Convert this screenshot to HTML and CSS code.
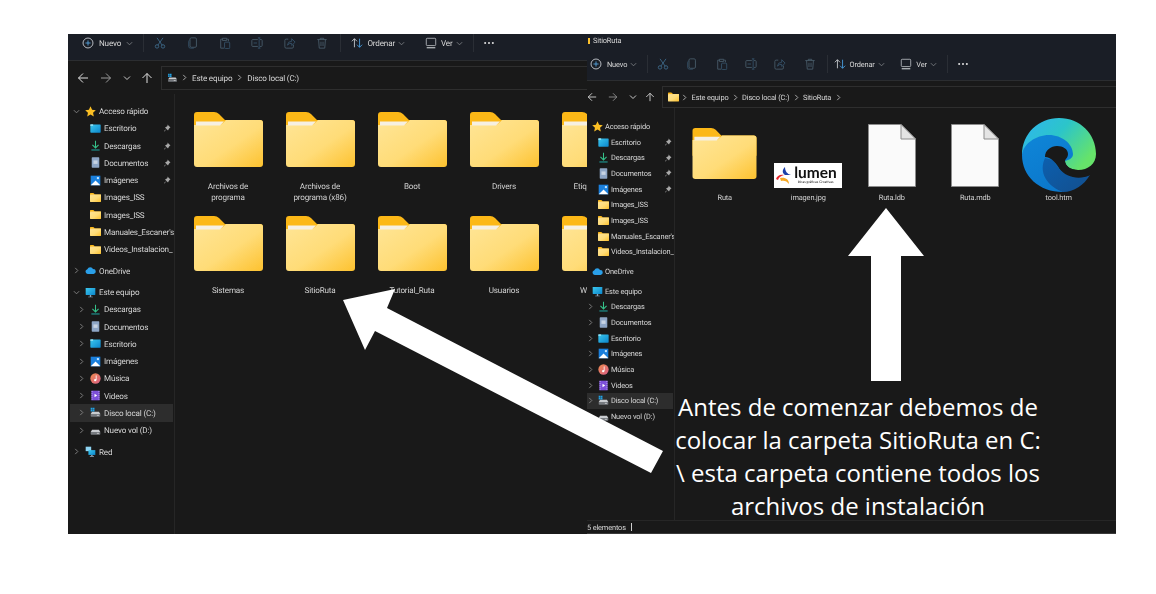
FILE: index.html
```html
<!DOCTYPE html>
<html lang="es">
<head>
  <meta charset="UTF-8" />
  <meta name="viewport" content="width=device-width, initial-scale=1.0"/>
  <title>Instalación SitioRuta</title>
  <link rel="stylesheet" href="styles.css">
</head>
<body>

<svg class="defs" aria-hidden="true">
  <defs>
    <linearGradient id="gFolder" x1="0" y1="0" x2="1" y2="1">
      <stop offset="0" stop-color="#ffe596"/><stop offset=".55" stop-color="#ffdc78"/><stop offset="1" stop-color="#fdc22f"/>
    </linearGradient>
    <linearGradient id="gTile" x1="0" y1="0" x2="1" y2="1">
      <stop offset="0" stop-color="#3cc8ee"/><stop offset="1" stop-color="#0b86cc"/>
    </linearGradient>
    <linearGradient id="gMusic" x1="0" y1="0" x2="1" y2="1">
      <stop offset="0" stop-color="#ee8a4e"/><stop offset="1" stop-color="#d95f86"/>
    </linearGradient>
    <linearGradient id="gEdgeTop" x1="0" y1="0" x2="1" y2=".6">
      <stop offset="0" stop-color="#2fb4f2"/><stop offset=".5" stop-color="#2cc5c9"/><stop offset="1" stop-color="#66e36a"/>
    </linearGradient>
    <linearGradient id="gEdgeMid" x1="0" y1="0" x2=".5" y2="1">
      <stop offset="0" stop-color="#0f86d8"/><stop offset="1" stop-color="#0b78cc"/>
    </linearGradient>
    <linearGradient id="gEdgeDark" x1="0" y1="0" x2="1" y2="1">
      <stop offset="0" stop-color="#0c5fae"/><stop offset="1" stop-color="#134f8e"/>
    </linearGradient>

    <symbol id="folder" viewBox="0 0 69 55">
      <path fill="#fcb817" d="M3 0H20q3 0 5 2l6 6H66a3 3 0 0 1 3 3V30H0V3a3 3 0 0 1 3-3z"/>
      <path fill="url(#gFolder)" d="M0 13H25q2 0 4-2l3-3H66a3 3 0 0 1 3 3V52a3 3 0 0 1-3 3H3a3 3 0 0 1-3-3z"/>
      <path fill="#f6f0e2" d="M2 9.500H30L26 13.500H2z"/>
    </symbol>
    <symbol id="star" viewBox="0 0 16 16">
      <path fill="#fbbf24" d="M8 .5l2.300 5 5.400.6-4 3.700 1.100 5.400L8 12.500l-4.800 2.700 1.100-5.400-4-3.700 5.400-.6z"/>
    </symbol>
    <symbol id="tile" viewBox="0 0 16 16">
      <rect x=".5" y="2" width="15" height="12" rx="1" fill="url(#gTile)"/>
      <rect x=".5" y="2" width="4" height="2" fill="#a5e7f7"/>
    </symbol>
    <symbol id="down" viewBox="0 0 16 16">
      <path fill="none" stroke="#35c28a" stroke-width="1.500" d="M8 1v10M3.500 7L8 11.500 12.500 7"/>
      <path fill="none" stroke="#1ea4a0" stroke-width="1.500" d="M2 14.500h12"/>
    </symbol>
    <symbol id="doc" viewBox="0 0 16 16">
      <rect x="2.500" y=".5" width="11" height="15" rx="1" fill="#8ea6c6"/>
      <rect x="5" y="5" width="6" height="5" fill="#c7d3e3"/>
    </symbol>
    <symbol id="pic" viewBox="0 0 16 16">
      <rect x="1" y="1" width="14" height="14" fill="#1a7fdc"/>
      <path fill="#fff" d="M1 15l5-5 2-2 3 3 4 4z"/>
      <rect x="10" y="3" width="3" height="3" fill="#bfe3ff"/>
    </symbol>
    <symbol id="music" viewBox="0 0 16 16">
      <circle cx="8" cy="8" r="7.500" fill="url(#gMusic)"/>
      <path fill="none" stroke="#fff" stroke-width="1.200" d="M9 3.500v7"/>
      <circle cx="7.500" cy="10.500" r="1.600" fill="#fff"/>
    </symbol>
    <symbol id="video" viewBox="0 0 16 16">
      <rect x="2" y="1" width="12" height="14" fill="#7c4fd8"/>
      <path fill="#fff" d="M6.500 5.500l4 2.500-4 2.500z"/>
      <path stroke="#c8aef5" stroke-width="1.300" stroke-dasharray="1.500 1.500" d="M3 1.500v13M13 1.500v13"/>
    </symbol>
    <symbol id="drive" viewBox="0 0 16 16">
      <path fill="#c9ccd0" d="M3 7h10l2 3H1z"/>
      <rect x="1" y="10" width="14" height="4" rx="1" fill="#777b80"/>
      <rect x="10" y="11.500" width="3" height="1" fill="#e5e5e5"/>
    </symbol>
    <symbol id="drivec" viewBox="0 0 16 16">
      <use href="#drive"/>
      <path fill="#22a3e6" d="M1 1h2.500v2.500H1zM4 1h2.500v2.500H4zM1 4h2.500v2.500H1zM4 4h2.500v2.500H4z"/>
    </symbol>
    <symbol id="cloud" viewBox="0 0 16 16">
      <path fill="#2a9fe8" d="M4 13a3.500 3.500 0 0 1-.6-6.900A4.500 4.500 0 0 1 11.800 6 3.500 3.500 0 0 1 12.500 13z"/>
    </symbol>
    <symbol id="pc" viewBox="0 0 16 16">
      <rect x="1" y="1.500" width="14" height="10" rx=".7" fill="url(#gTile)"/>
      <path fill="#8aa3b8" d="M7 11.500h2V14H7zM4.500 14h7v1h-7z"/>
    </symbol>
    <symbol id="net" viewBox="0 0 16 16">
      <rect x="1" y="1" width="8" height="6.500" fill="#8ed4f2"/>
      <rect x="5" y="6" width="10" height="7" fill="url(#gTile)"/>
      <path fill="#9ab1c4" d="M9 13h2v1.500h2v1H7v-1h2z"/>
    </symbol>
    <symbol id="pin" viewBox="0 0 16 16">
      <path fill="#a8a8a8" d="M9 1l6 6-2 1-2 3-1 2-3-3-4 5-1-1 5-4-3-3 2-1 3-2z"/>
    </symbol>
    <symbol id="chev-r" viewBox="0 0 8 8">
      <path fill="none" stroke="currentColor" d="M2.500 1l3 3-3 3"/>
    </symbol>
    <symbol id="chev-d" viewBox="0 0 8 8">
      <path fill="none" stroke="currentColor" d="M1 2.500l3 3 3-3"/>
    </symbol>
    <symbol id="back" viewBox="0 0 12 12">
      <path fill="none" stroke="currentColor" d="M11 6H1.500M6 1.500L1.500 6 6 10.500"/>
    </symbol>
    <symbol id="fwd" viewBox="0 0 12 12">
      <path fill="none" stroke="currentColor" d="M1 6h9.500M6 1.500L10.500 6 6 10.500"/>
    </symbol>
    <symbol id="up" viewBox="0 0 12 12">
      <path fill="none" stroke="currentColor" d="M6 11V1.500M1.500 6L6 1.500 10.500 6"/>
    </symbol>
    <symbol id="plus" viewBox="0 0 14 14">
      <circle cx="7" cy="7" r="5.800" fill="none" stroke="#cfd3d8"/>
      <path stroke="#5aa9e6" d="M7 4v6M4 7h6"/>
    </symbol>
    <symbol id="cut" viewBox="0 0 14 14">
      <path fill="none" stroke="#3f6d8e" d="M3.500 1l6 8.500M10.500 1l-6 8.500"/>
      <circle cx="3.500" cy="11" r="2" fill="none" stroke="#3f6d8e"/>
      <circle cx="10.500" cy="11" r="2" fill="none" stroke="#3f6d8e"/>
    </symbol>
    <symbol id="copy" viewBox="0 0 14 14">
      <rect x="3.500" y="1" width="7.500" height="11" rx="1.500" fill="none" stroke="#4a5d6c"/>
      <path fill="none" stroke="#36536a" d="M3 3.500Q2 4 2 5v6q0 2 2 2h4"/>
    </symbol>
    <symbol id="paste" viewBox="0 0 14 14">
      <path fill="none" stroke="#4a5d6c" d="M4 2.500H2v10.500h4M9.500 2.500H11v2.500M4 1.500h5v2.500H4z"/>
      <rect x="6.500" y="6" width="6" height="7.500" rx="1" fill="none" stroke="#36536a"/>
    </symbol>
    <symbol id="rename" viewBox="0 0 14 14">
      <path fill="none" stroke="#4a5d6c" d="M8 3H2q-1 0-1 1v6q0 1 1 1h6M10.500 3H12q1 0 1 1v6q0 1-1 1h-1.500"/>
      <path fill="none" stroke="#36536a" d="M9.500 1v12M8 1h3M8 13h3M3 7h4"/>
    </symbol>
    <symbol id="share" viewBox="0 0 14 14">
      <path fill="none" stroke="#4a5d6c" d="M5 2.500H2.500q-1.500 0-1.500 1.500v7.500q0 1.500 1.500 1.500h7q1.500 0 1.500-1.500V9"/>
      <path fill="none" stroke="#36536a" d="M4 9.500Q4.500 5 9 5V2l4 4-4 4V7.500Q6 7 4 9.500z"/>
    </symbol>
    <symbol id="trash" viewBox="0 0 14 14">
      <path fill="none" stroke="#4a5d6c" d="M1.500 3h11M5 3V1.500h4V3M3 3l.8 10h6.400L11 3M5.800 5.500v5M8.200 5.500v5"/>
    </symbol>
    <symbol id="sort" viewBox="0 0 14 14">
      <path fill="none" stroke="#d0d3d6" d="M4 12V2M1 5l3-3 3 3"/>
      <path fill="none" stroke="#4aa3e8" d="M10 2v10M7 9l3 3 3-3"/>
    </symbol>
    <symbol id="view" viewBox="0 0 14 14">
      <rect x="1.500" y="1.500" width="11" height="8.500" rx="1" fill="none" stroke="#b4b8bc"/>
      <path stroke="#b4b8bc" stroke-width="1.500" d="M2 12.500h10"/>
    </symbol>
    <symbol id="dots" viewBox="0 0 14 14">
      <circle cx="2.500" cy="7" r="1.200" fill="#e0e0e0"/>
      <circle cx="7" cy="7" r="1.200" fill="#e0e0e0"/>
      <circle cx="11.500" cy="7" r="1.200" fill="#e0e0e0"/>
    </symbol>
    <symbol id="edge" viewBox="0 0 74 74">
      <path fill="url(#gEdgeTop)" d="M0 37C0 15 17 0 37 0c21 0 37 16 37 36 0 10-8 16-18 16-7 0-13-4-13-9 0-2 3-3 3-7 0-6-5-8-11-8C20 28 5 30 0 37z"/>
      <path fill="url(#gEdgeMid)" d="M0 37C1 26 14 17 27 17c13 0 24 9 24 19 0 4-4 6-8 7L30 60l11 14C17 74 0 58 0 37z"/>
      <path fill="url(#gEdgeDark)" d="M23 40c-5 10-3 26 18 34 11 0 21-7 27-17-13 5-28 1-37-15z"/>
      <path fill="#191919" d="M23 39c0-7 6-11 12-11 6 0 11 3 11 8 0 4-3 5-3 7 0 5 6 9 13 9 5 0 10 2 12 5-10 5-24 3-31-7-4-6-8-11-14-11z"/>
    </symbol>
  </defs>
</svg>

<div class="stage">

  <!-- ventana Disco local (C:) -->
  <section class="win win-a">
    <div class="toolbar">
      <svg class="tb-ic"><use href="#plus"/></svg>
      <span class="tb-text new">Nuevo</span>
      <svg class="tb-chev"><use href="#chev-d"/></svg>
      <i class="sep to-tools"></i>
      <span class="tool"><svg class="tb-ic"><use href="#cut"/></svg></span>
      <span class="tool"><svg class="tb-ic"><use href="#copy"/></svg></span>
      <span class="tool"><svg class="tb-ic"><use href="#paste"/></svg></span>
      <span class="tool"><svg class="tb-ic"><use href="#rename"/></svg></span>
      <span class="tool"><svg class="tb-ic"><use href="#share"/></svg></span>
      <span class="tool"><svg class="tb-ic"><use href="#trash"/></svg></span>
      <i class="sep from-tools"></i>
      <svg class="tb-ic"><use href="#sort"/></svg>
      <span class="tb-text">Ordenar</span>
      <svg class="tb-chev"><use href="#chev-d"/></svg>
      <svg class="tb-ic view"><use href="#view"/></svg>
      <span class="tb-text">Ver</span>
      <svg class="tb-chev"><use href="#chev-d"/></svg>
      <i class="sep"></i>
      <svg class="tb-ic dots"><use href="#dots"/></svg>
    </div>
    <div class="addr-row">
      <div class="nav">
        <svg class="nav-ic"><use href="#back"/></svg>
        <svg class="nav-ic dim"><use href="#fwd"/></svg>
        <svg class="nav-ch"><use href="#chev-d"/></svg>
        <svg class="nav-ic"><use href="#up"/></svg>
      </div>
      <div class="addr">
        <svg class="addr-ic"><use href="#drivec"/></svg>
        <svg class="crumb"><use href="#chev-r"/></svg><span>Este equipo</span>
        <svg class="crumb"><use href="#chev-r"/></svg><span>Disco local (C:)</span>
      </div>
    </div>
    <div class="body">
      <nav class="side">
        <div class="row top"><svg class="chev"><use href="#chev-d"/></svg><svg class="ic"><use href="#star"/></svg><span class="lb">Acceso rápido</span></div>
        <div class="row sub"><i class="chev"></i><svg class="ic"><use href="#tile"/></svg><span class="lb">Escritorio</span><svg class="pin"><use href="#pin"/></svg></div>
        <div class="row sub"><i class="chev"></i><svg class="ic"><use href="#down"/></svg><span class="lb">Descargas</span><svg class="pin"><use href="#pin"/></svg></div>
        <div class="row sub"><i class="chev"></i><svg class="ic"><use href="#doc"/></svg><span class="lb">Documentos</span><svg class="pin"><use href="#pin"/></svg></div>
        <div class="row sub"><i class="chev"></i><svg class="ic"><use href="#pic"/></svg><span class="lb">Imágenes</span><svg class="pin"><use href="#pin"/></svg></div>
        <div class="row sub"><i class="chev"></i><svg class="ic"><use href="#folder"/></svg><span class="lb">Images_ISS</span></div>
        <div class="row sub"><i class="chev"></i><svg class="ic"><use href="#folder"/></svg><span class="lb">Images_ISS</span></div>
        <div class="row sub"><i class="chev"></i><svg class="ic"><use href="#folder"/></svg><span class="lb">Manuales_Escaner's</span></div>
        <div class="row sub"><i class="chev"></i><svg class="ic"><use href="#folder"/></svg><span class="lb">Videos_Instalacion_</span></div>
        <div class="row top group"><svg class="chev"><use href="#chev-r"/></svg><svg class="ic"><use href="#cloud"/></svg><span class="lb">OneDrive</span></div>
        <div class="row top group"><svg class="chev"><use href="#chev-d"/></svg><svg class="ic"><use href="#pc"/></svg><span class="lb">Este equipo</span></div>
        <div class="row sub"><svg class="chev"><use href="#chev-r"/></svg><svg class="ic"><use href="#down"/></svg><span class="lb">Descargas</span></div>
        <div class="row sub"><svg class="chev"><use href="#chev-r"/></svg><svg class="ic"><use href="#doc"/></svg><span class="lb">Documentos</span></div>
        <div class="row sub"><svg class="chev"><use href="#chev-r"/></svg><svg class="ic"><use href="#tile"/></svg><span class="lb">Escritorio</span></div>
        <div class="row sub"><svg class="chev"><use href="#chev-r"/></svg><svg class="ic"><use href="#pic"/></svg><span class="lb">Imágenes</span></div>
        <div class="row sub"><svg class="chev"><use href="#chev-r"/></svg><svg class="ic"><use href="#music"/></svg><span class="lb">Música</span></div>
        <div class="row sub"><svg class="chev"><use href="#chev-r"/></svg><svg class="ic"><use href="#video"/></svg><span class="lb">Videos</span></div>
        <div class="row sub selected"><svg class="chev"><use href="#chev-r"/></svg><svg class="ic"><use href="#drivec"/></svg><span class="lb">Disco local (C:)</span></div>
        <div class="row sub"><svg class="chev"><use href="#chev-r"/></svg><svg class="ic"><use href="#drive"/></svg><span class="lb">Nuevo vol (D:)</span></div>
        <div class="row top group"><svg class="chev"><use href="#chev-r"/></svg><svg class="ic"><use href="#net"/></svg><span class="lb">Red</span></div>
      </nav>
      <main class="grid">
        <div class="item"><svg class="big"><use href="#folder"/></svg><span class="name">Archivos de programa</span></div>
        <div class="item"><svg class="big"><use href="#folder"/></svg><span class="name">Archivos de programa (x86)</span></div>
        <div class="item"><svg class="big"><use href="#folder"/></svg><span class="name">Boot</span></div>
        <div class="item"><svg class="big"><use href="#folder"/></svg><span class="name">Drivers</span></div>
        <div class="item"><svg class="big"><use href="#folder"/></svg><span class="name">Etiquetas_Ru</span></div>
        <div class="item"><svg class="big"><use href="#folder"/></svg><span class="name">Sistemas</span></div>
        <div class="item"><svg class="big"><use href="#folder"/></svg><span class="name">SitioRuta</span></div>
        <div class="item"><svg class="big"><use href="#folder"/></svg><span class="name">Tutorial_Ruta</span></div>
        <div class="item"><svg class="big"><use href="#folder"/></svg><span class="name">Usuarios</span></div>
        <div class="item"><svg class="big"><use href="#folder"/></svg><span class="name">Windows</span></div>
      </main>
    </div>
  </section>

  <!-- ventana SitioRuta -->
  <section class="win win-b">
    <div class="titlebar"><i class="title-ic"></i>SitioRuta</div>
    <div class="toolbar">
      <svg class="tb-ic"><use href="#plus"/></svg>
      <span class="tb-text new">Nuevo</span>
      <svg class="tb-chev"><use href="#chev-d"/></svg>
      <i class="sep to-tools"></i>
      <span class="tool"><svg class="tb-ic"><use href="#cut"/></svg></span>
      <span class="tool"><svg class="tb-ic"><use href="#copy"/></svg></span>
      <span class="tool"><svg class="tb-ic"><use href="#paste"/></svg></span>
      <span class="tool"><svg class="tb-ic"><use href="#rename"/></svg></span>
      <span class="tool"><svg class="tb-ic"><use href="#share"/></svg></span>
      <span class="tool"><svg class="tb-ic"><use href="#trash"/></svg></span>
      <i class="sep from-tools"></i>
      <svg class="tb-ic"><use href="#sort"/></svg>
      <span class="tb-text">Ordenar</span>
      <svg class="tb-chev"><use href="#chev-d"/></svg>
      <svg class="tb-ic view"><use href="#view"/></svg>
      <span class="tb-text">Ver</span>
      <svg class="tb-chev"><use href="#chev-d"/></svg>
      <i class="sep"></i>
      <svg class="tb-ic dots"><use href="#dots"/></svg>
    </div>
    <div class="addr-row">
      <div class="nav">
        <svg class="nav-ic"><use href="#back"/></svg>
        <svg class="nav-ic dim"><use href="#fwd"/></svg>
        <svg class="nav-ch"><use href="#chev-d"/></svg>
        <svg class="nav-ic"><use href="#up"/></svg>
      </div>
      <div class="addr">
        <svg class="addr-ic"><use href="#folder"/></svg>
        <svg class="crumb"><use href="#chev-r"/></svg><span>Este equipo</span>
        <svg class="crumb"><use href="#chev-r"/></svg><span>Disco local (C:)</span>
        <svg class="crumb"><use href="#chev-r"/></svg><span>SitioRuta</span>
        <svg class="crumb"><use href="#chev-r"/></svg>
      </div>
    </div>
    <div class="body">
      <nav class="side">
        <div class="row top"><svg class="ic"><use href="#star"/></svg><span class="lb">Acceso rápido</span></div>
        <div class="row sub"><i class="chev"></i><svg class="ic"><use href="#tile"/></svg><span class="lb">Escritorio</span><svg class="pin"><use href="#pin"/></svg></div>
        <div class="row sub"><i class="chev"></i><svg class="ic"><use href="#down"/></svg><span class="lb">Descargas</span><svg class="pin"><use href="#pin"/></svg></div>
        <div class="row sub"><i class="chev"></i><svg class="ic"><use href="#doc"/></svg><span class="lb">Documentos</span><svg class="pin"><use href="#pin"/></svg></div>
        <div class="row sub"><i class="chev"></i><svg class="ic"><use href="#pic"/></svg><span class="lb">Imágenes</span><svg class="pin"><use href="#pin"/></svg></div>
        <div class="row sub"><i class="chev"></i><svg class="ic"><use href="#folder"/></svg><span class="lb">Images_ISS</span></div>
        <div class="row sub"><i class="chev"></i><svg class="ic"><use href="#folder"/></svg><span class="lb">Images_ISS</span></div>
        <div class="row sub"><i class="chev"></i><svg class="ic"><use href="#folder"/></svg><span class="lb">Manuales_Escaner's</span></div>
        <div class="row sub"><i class="chev"></i><svg class="ic"><use href="#folder"/></svg><span class="lb">Videos_Instalacion_</span></div>
        <div class="row top group"><svg class="ic"><use href="#cloud"/></svg><span class="lb">OneDrive</span></div>
        <div class="row top group"><svg class="ic"><use href="#pc"/></svg><span class="lb">Este equipo</span></div>
        <div class="row sub"><svg class="chev"><use href="#chev-r"/></svg><svg class="ic"><use href="#down"/></svg><span class="lb">Descargas</span></div>
        <div class="row sub"><svg class="chev"><use href="#chev-r"/></svg><svg class="ic"><use href="#doc"/></svg><span class="lb">Documentos</span></div>
        <div class="row sub"><svg class="chev"><use href="#chev-r"/></svg><svg class="ic"><use href="#tile"/></svg><span class="lb">Escritorio</span></div>
        <div class="row sub"><svg class="chev"><use href="#chev-r"/></svg><svg class="ic"><use href="#pic"/></svg><span class="lb">Imágenes</span></div>
        <div class="row sub"><svg class="chev"><use href="#chev-r"/></svg><svg class="ic"><use href="#music"/></svg><span class="lb">Música</span></div>
        <div class="row sub"><svg class="chev"><use href="#chev-r"/></svg><svg class="ic"><use href="#video"/></svg><span class="lb">Videos</span></div>
        <div class="row sub selected"><svg class="chev"><use href="#chev-r"/></svg><svg class="ic"><use href="#drivec"/></svg><span class="lb">Disco local (C:)</span></div>
        <div class="row sub"><svg class="chev"><use href="#chev-r"/></svg><svg class="ic"><use href="#drive"/></svg><span class="lb">Nuevo vol (D:)</span></div>
      </nav>
      <main class="grid">
        <div class="item"><div class="thumb"><svg class="big"><use href="#folder"/></svg></div><span class="name">Ruta</span></div>
        <div class="item">
          <div class="thumb">
            <div class="logo">
              <svg class="logo-mark" viewBox="0 0 15 17">
                <path fill="#e8262a" d="M0 12C1 9 4 7 8 8 5 9 3 10 2 13z"/>
                <path fill="#1c3fa8" d="M9 0c-3 3-3 6 0 8h6C11 7 9 4 9 0z"/>
                <path fill="#f7a823" d="M4 11c5-1 9 1 9 6-2-3-5-4-8-3z"/>
              </svg>
              <div class="logo-text"><b>lumen</b><small>Ideas gráficas Creativas</small></div>
            </div>
          </div>
          <span class="name">imagen.jpg</span>
        </div>
        <div class="item"><div class="thumb"><svg class="page" viewBox="0 0 48 63"><path fill="#fafafa" stroke="#8c8c8c" d="M.5.5H33L47.500 15V62.500H.5z"/><path fill="#e4e4e4" stroke="#8c8c8c" d="M33 .5V15H47.500z"/></svg></div><span class="name">Ruta.ldb</span></div>
        <div class="item"><div class="thumb"><svg class="page" viewBox="0 0 48 63"><path fill="#fafafa" stroke="#8c8c8c" d="M.5.5H33L47.500 15V62.500H.5z"/><path fill="#e4e4e4" stroke="#8c8c8c" d="M33 .5V15H47.500z"/></svg></div><span class="name">Ruta.mdb</span></div>
        <div class="item"><div class="thumb"><svg class="edge"><use href="#edge"/></svg></div><span class="name">tool.htm</span></div>
      </main>
    </div>
    <footer class="status"><span>5 elementos</span><i class="status-bar"></i></footer>
  </section>

  <!-- flechas -->
  <svg class="arrows" viewBox="0 0 1156 594">
    <polygon fill="#fff" points="343,300 395,289 387,308 663,451 651,473 375,331 365,350"/>
    <polygon fill="#fff" points="886,208 924,256 901,256 901,381 871,381 871,256 848,256"/>
  </svg>

  <p class="caption">Antes de comenzar debemos de colocar la carpeta SitioRuta en C:<br>\ esta carpeta contiene todos los archivos de instalación</p>
</div>

</body>
</html>
```

FILE: styles.css
```css
* {
  box-sizing: border-box;
}

body {
  margin: 0;
  background: #fff;
  font-family: Roboto, "Open Sans", sans-serif;
}

.defs {
  position: absolute;
  width: 0;
  height: 0;
}

.stage {
  position: relative;
  width: 1156px;
  height: 594px;
  overflow: hidden;
}

/* ventanas */
.win {
  position: absolute;
  top: 34px;
  height: 500px;
  display: flex;
  flex-direction: column;
  overflow: hidden;
  background: #191919;
  color: #d6d6d6;
  filter: blur(.3px);
  text-rendering: geometricPrecision;
}

.win-a {
  left: 68px;
  width: 520px;
  --fs: 8.1px;
  --row: 17.25px;
  --group: 4.3px;
  --side: 107px;
  --tool: 32.4px;
  --pad-top: 8.5px;
  --view-gap: 20px;
  --after-tools: 10px;
  --new-gap: 2px;
  --pin-gap: 3px;
  --name-w: 70px;
  letter-spacing: -.17px;
}

.win-b {
  left: 587px;
  width: 529px;
  --fs: 7.4px;
  --row: 15.7px;
  --group: 3.9px;
  --side: 88px;
  --tool: 29.4px;
  --pad-top: 10.5px;
  --view-gap: 15.5px;
  --after-tools: 6px;
  --new-gap: 0px;
  --pin-gap: 2px;
  --name-w: 80px;
  letter-spacing: -.15px;
}

.titlebar {
  height: 13px;
  display: flex;
  align-items: center;
  padding-left: 1px;
  font-size: 7.4px;
  background: #1a1e26;
}

.title-ic {
  width: 2px;
  height: 6px;
  margin-right: 3px;
  background: #fcc02c;
}

/* barra de herramientas */
.toolbar {
  display: flex;
  align-items: center;
  flex: none;
  background: #1a1e26;
  border-bottom: 1px solid #2b2d30;
  font-size: var(--fs);
}

.win-a .toolbar {
  height: 27px;
  padding: 0 0 8px 14px;
}

.win-b .toolbar {
  height: 34px;
  padding: 1px 0 0 3px;
}

.tb-ic {
  width: 12px;
  height: 12px;
  flex: none;
}

.tb-ic.view {
  margin-left: var(--view-gap);
}

.tb-text {
  margin-left: 4px;
  color: #d8d8d8;
}

.tb-text.new {
  margin: 0 var(--new-gap) 0 5px;
}

.tb-chev {
  width: 7px;
  height: 7px;
  margin-left: 3px;
  color: #7c7f84;
  flex: none;
}

.sep {
  width: 1px;
  height: 18px;
  margin: 0 7px 0 10px;
  background: #2a2e35;
  flex: none;
}

.sep.to-tools {
  margin-right: 0;
}

.sep.from-tools {
  margin-left: 2px;
  margin-right: var(--after-tools);
}

.tool {
  display: flex;
  justify-content: center;
  width: var(--tool);
  flex: none;
}

.dots {
  margin-left: 2px;
}

/* fila de dirección */
.addr-row {
  display: flex;
  align-items: center;
  flex: none;
}

.win-a .addr-row {
  height: 33px;
  padding-left: 9px;
}

.win-b .addr-row {
  height: 27px;
  align-items: flex-end;
}

.nav {
  display: flex;
  align-items: center;
  width: 84px;
  flex: none;
}

.win-b .nav {
  width: 75px;
  height: 22px;
}

.nav-ic {
  width: 12px;
  height: 12px;
  margin-right: 11px;
  color: #e2e2e2;
  flex: none;
}

.nav-ic.dim {
  color: #9a9a9a;
}

.nav-ch {
  width: 8px;
  height: 8px;
  margin-right: 10px;
  color: #c8c8c8;
  flex: none;
}

.win-b .nav-ic {
  width: 10px;
  height: 10px;
}

.win-b .nav-ch {
  margin-right: 8px;
}

.addr {
  display: flex;
  align-items: center;
  flex: 1;
  height: 24px;
  padding-left: 5px;
  border: 1px solid #2e2e2e;
  border-right: 0;
  font-size: var(--fs);
}

.win-b .addr {
  height: 22px;
}

.addr-ic {
  width: 11px;
  height: 10px;
  margin-right: -1px;
  flex: none;
}

.crumb {
  width: 7px;
  height: 7px;
  margin: 0 4px;
  color: #bdbdbd;
  flex: none;
}

.win-b .crumb {
  margin: 0 3.3px;
}

/* panel lateral */
.body {
  display: flex;
  flex: 1;
  min-height: 0;
}

.side {
  width: var(--side);
  flex: none;
  padding-top: var(--pad-top);
  border-right: 1px solid #262626;
  font-size: var(--fs);
}

.row {
  display: flex;
  align-items: center;
  height: var(--row);
}

.row.group {
  margin-top: var(--group);
}

.win-a .row.top {
  padding-left: 5px;
}

.win-a .row.sub {
  padding-left: 10px;
}

.win-b .row.top {
  padding-left: 5px;
}

.win-b .row.sub {
  padding-left: 0;
}

.chev {
  display: block;
  width: 7px;
  height: 7px;
  margin-right: 5px;
  color: #8a8a8a;
  flex: none;
}

.win-b .chev {
  margin-right: 4px;
}

.ic {
  width: 11px;
  height: 11px;
  margin-right: 3px;
  flex: none;
}

.win-b .ic {
  margin-right: 2px;
}

.lb {
  flex: 1;
  overflow: hidden;
  white-space: nowrap;
}

.pin {
  width: 8px;
  height: 8px;
  margin-right: var(--pin-gap);
  flex: none;
}

.selected {
  background: #2d2d2d;
}

.win-a .row.selected {
  margin: 0 1px 0 2px;
  padding-left: 8px;
}

.win-b .row.selected {
  margin-right: 1px;
}

/* contenido */
.grid {
  display: grid;
  flex: none;
  align-content: start;
}

.win-a .grid {
  grid-template-columns: repeat(5, 92px);
  grid-auto-rows: 104px;
  padding: 18px 0 0 7px;
}

.win-b .grid {
  grid-template-columns: repeat(5, 83.5px);
  padding: 10px 0 0 8px;
}

.item {
  display: flex;
  flex-direction: column;
  align-items: center;
}

.big {
  width: 69px;
  height: 55px;
  flex: none;
}

.name {
  width: var(--name-w);
  line-height: 11px;
  font-size: var(--fs);
  text-align: center;
  color: #d2d2d2;
}

.win-a .name {
  margin-top: 14px;
}

.thumb {
  display: flex;
  justify-content: center;
  align-items: center;
  height: 74px;
}

.win-b .big {
  width: 65px;
  height: 51px;
  margin-bottom: 3px;
}

.logo {
  display: flex;
  align-items: center;
  align-self: flex-end;
  width: 68px;
  height: 25px;
  margin-bottom: 4px;
  padding: 0 2px;
  background: #fff;
  letter-spacing: 0;
}

.logo-mark {
  width: 15px;
  height: 17px;
  flex: none;
}

.logo-text {
  margin-left: 3px;
  color: #111;
  text-align: center;
  font-family: "Lato", sans-serif;
}

.logo-text b {
  display: block;
  font-size: 15.5px;
  line-height: 13px;
}

.logo-text small {
  display: block;
  font-size: 3.5px;
  line-height: 5px;
  white-space: nowrap;
}

.page {
  width: 48px;
  height: 63px;
  margin-top: 1px;
}

.edge {
  width: 74px;
  height: 74px;
}

.status {
  display: flex;
  align-items: center;
  flex: none;
  height: 14px;
  border-top: 1px solid #262626;
  border-bottom: 1px solid #3a3a3a;
  font-size: 7.4px;
}

.status-bar {
  width: 1px;
  height: 8px;
  margin-left: 5px;
  background: #cfcfcf;
}

/* encima de las ventanas */
.arrows {
  position: absolute;
  top: 0;
  left: 0;
  width: 1156px;
  height: 594px;
}

.caption {
  position: absolute;
  top: 390px;
  left: 668px;
  width: 380px;
  margin: 0;
  color: #fff;
  font-family: "Open Sans", sans-serif;
  font-size: 24px;
  line-height: 33px;
  text-align: center;
}
```
